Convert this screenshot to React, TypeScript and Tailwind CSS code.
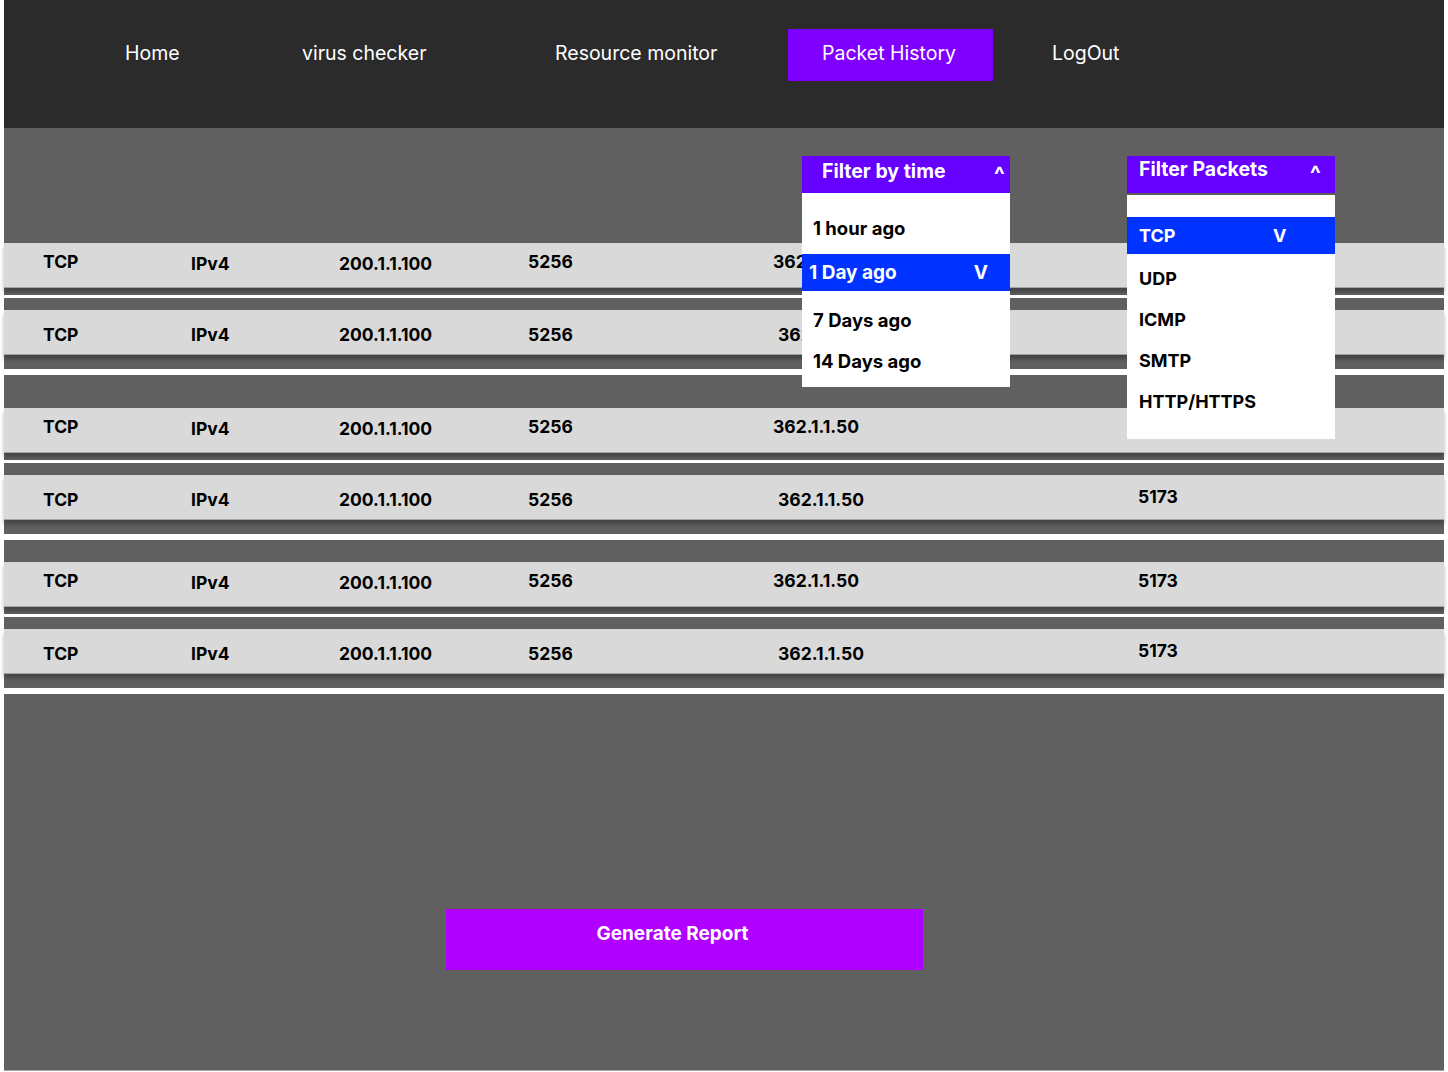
import { useState } from "react";

const navItems = [
  { label: "Home", slot: "w-[177px]" },
  { label: "virus checker", slot: "w-[253px]" },
  { label: "Resource monitor", slot: "w-[233px]" },
];

// odd rows sit a bit higher and the 5th column is 5px further left
const rows = [
  { gap: "mt-[115px]", shadow: "h-[7px]", line: "h-[3px]", odd: true },
  { gap: "mt-[12px]", shadow: "h-[14px]", line: "h-[6px]", odd: false },
  { gap: "mt-[33px]", shadow: "h-[7px]", line: "h-[3px]", odd: true },
  { gap: "mt-[12px]", shadow: "h-[14px]", line: "h-[6px]", odd: false },
  { gap: "mt-[22px]", shadow: "h-[7px]", line: "h-[3px]", odd: true },
  { gap: "mt-[12px]", shadow: "h-[14px]", line: "h-[6px]", odd: false },
];

const timeOptions = ["1 hour ago", "1 Day ago", "7 Days ago", "14 Days ago"];
const packetOptions = ["UDP", "ICMP", "SMTP", "HTTP/HTTPS"];

const PacketRow = ({ odd }: { odd: boolean }) => {
  const a = odd ? "pt-[9px]" : "pt-[15px]";
  const b = odd ? "pt-[11px]" : "pt-[15px]";
  const c = odd ? "pt-[9px]" : "pt-[12px]";
  return (
    <div className="relative z-[1] flex h-[45px] bg-[#d9d9d9] border-b border-[#a3a3a3] pl-[39px] text-[17.5px] font-bold leading-[20px] text-black shadow-[0_4px_4px_rgba(0,0,0,0.3)]">
      <div className={`w-[148px] ${a}`}>TCP</div>
      <div className={`w-[148px] ${b}`}>IPv4</div>
      <div className={`w-[189px] ${b}`}>200.1.1.100</div>
      <div className={`w-[245px] ${a}`}>5256</div>
      <div className={`w-[365px] ${a} ${odd ? "" : "pl-[5px]"}`}>362.1.1.50</div>
      <div className={c}>5173</div>
    </div>
  );
};

export default function App() {
  const [time] = useState("1 Day ago");

  return (
    <div className="min-h-screen bg-white font-['Inter',sans-serif]">
      <div className="ml-[4px] w-[1440px]">
        {/* Top nav */}
        <header className="flex h-[128px] items-start bg-[#2b2b2b] pl-[121px] pt-[29px] text-[19.5px] text-white">
          {navItems.map((n) => (
            <div key={n.label} className={`flex h-[52px] items-center pb-[2px] ${n.slot}`}>
              {n.label}
            </div>
          ))}
          <div className="flex h-[52px] w-[205px] items-center bg-[#8000ff] pb-[2px] pl-[34px]">
            Packet History
          </div>
          <div className="ml-[59px] flex h-[52px] items-center pb-[2px]">LogOut</div>
        </header>

        {/* Packet list */}
        <main className="relative flow-root h-[943px] bg-[#606060] border-b border-[#a3a3a3]">
          {rows.map((r, i) => (
            <div key={i} className={r.gap}>
              <PacketRow odd={r.odd} />
              <div className={r.shadow} />
              <div className={`bg-white ${r.line}`} />
            </div>
          ))}

          <div className="ml-[442px] mt-[215px] flex h-[61px] w-[477px] justify-center bg-[#b000ff] pr-[24px] pt-[15px] text-[19px] font-bold leading-[20px] text-white">
            Generate Report
          </div>

          {/* Filter by time dropdown */}
          <div className="absolute left-[798px] top-[28px] z-10 w-[208px] text-[18.5px] font-bold leading-[20px]">
            <div className="flex h-[37px] items-start justify-between bg-[#6600ff] pl-[20px] pr-[5px] pt-[5px] text-[19.5px] text-white">
              <span>Filter by time</span>
              <span className="pt-[4px] text-[23px] leading-[20px]">^</span>
            </div>
            <div className="h-[194px] bg-white pt-[25px] text-black">
              {timeOptions.map((t) =>
                t === time ? (
                  <div key={t} className="mt-[16px] flex h-[37px] items-center justify-between bg-[#0033ff] pl-[7px] pr-[22px] text-[19px] text-white">
                    <span>{t}</span>
                    <span>V</span>
                  </div>
                ) : (
                  <div key={t} className={`flex h-[20px] items-center pl-[11px] ${t === "7 Days ago" ? "mt-[19px]" : t === "14 Days ago" ? "mt-[21px] pl-[10px]" : ""}`}>
                    {t}
                  </div>
                )
              )}
            </div>
          </div>

          {/* Filter packets dropdown */}
          <div className="absolute left-[1123px] top-[28px] z-10 w-[208px] text-[18px] font-bold leading-[20px]">
            <div className="flex h-[37px] items-start justify-between bg-[#6600ff] pl-[12px] pr-[14px] pt-[3px] text-[19.5px] text-white">
              <span>Filter Packets</span>
              <span className="pt-[5px] text-[23px] leading-[20px]">^</span>
            </div>
            <div className="h-[2px] bg-[#5a5a5a]" />
            <div className="h-[244px] bg-white pt-[22px] text-black">
              <div className="flex h-[37px] items-center bg-[#0033ff] pl-[12px] text-white">
                <span className="w-[134px]">TCP</span>
                <span>V</span>
              </div>
              {packetOptions.map((p, i) => (
                <div key={p} className={`flex h-[20px] items-center pl-[12px] ${i === 0 ? "mt-[15px]" : "mt-[21px]"}`}>
                  {p}
                </div>
              ))}
            </div>
          </div>
        </main>
      </div>
    </div>
  );
}
